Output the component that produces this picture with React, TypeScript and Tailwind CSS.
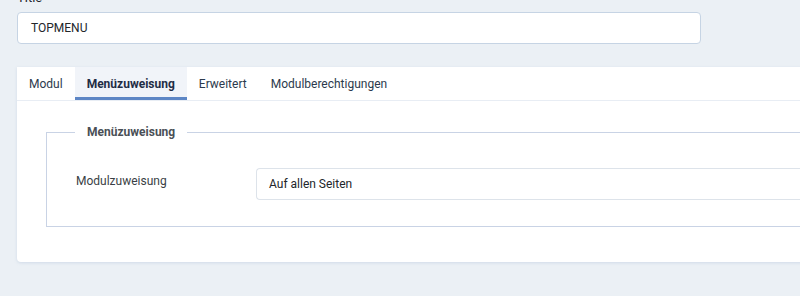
import React from "react";

export default function App() {
  const tabs = ["Modul", "Menüzuweisung", "Erweitert", "Modulberechtigungen"];
  return (
    <div
      className="w-[800px] h-[296px] overflow-hidden bg-[#ebf0f5] pl-[17px]"
      style={{ fontFamily: "Roboto, 'Liberation Sans', sans-serif" }}
    >
      <div className="mt-[-12px] h-[20px] text-[13px] leading-[20px] text-[#22262a] mb-[4px]">Title</div>
      <div className="w-[684px] h-[32px] bg-white border border-[#c6d4e4] rounded-[4px] flex items-center pl-[13px] text-[12px] text-[#22262a]">
        TOPMENU
      </div>
      <div className="mt-[23px] w-[800px] bg-white rounded-bl-[4px] shadow-[0_1px_3px_rgba(160,180,210,0.35)] pb-[35px]">
        <div className="flex h-[34px] border-b border-[#e8edf4]">
          {tabs.map((t, i) => (
            <div
              key={t}
              className={
                i === 1
                  ? "px-[12px] flex items-center text-[12px] font-bold text-[#1f2d45] bg-[#f1f4f9] border-b-[3px] border-[#5d86c5] pt-[3px]"
                  : "px-[12px] flex items-center text-[12px] text-[#2c3a4d]"
              }
            >
              {t}
            </div>
          ))}
        </div>
        <fieldset className="ml-[29px] mt-[22px] border border-[#c9d3e5] pl-[28px] pr-0 pt-[27px] pb-[26px] min-w-0">
          <legend className="px-[12px] text-[12px] leading-[18px] font-bold text-[#4a4f56]">Menüzuweisung</legend>
          <div className="flex items-start">
            <div className="w-[181px] pl-[1px] pt-[4px] text-[12px] text-[#3a3f45]">Modulzuweisung</div>
            <div className="flex-1 h-[32px] border border-[#dde3ea] rounded-l-[4px] border-r-0 flex items-center pl-[12px] text-[12px] text-[#22262a]">
              Auf allen Seiten
            </div>
          </div>
        </fieldset>
      </div>
    </div>
  );
}
